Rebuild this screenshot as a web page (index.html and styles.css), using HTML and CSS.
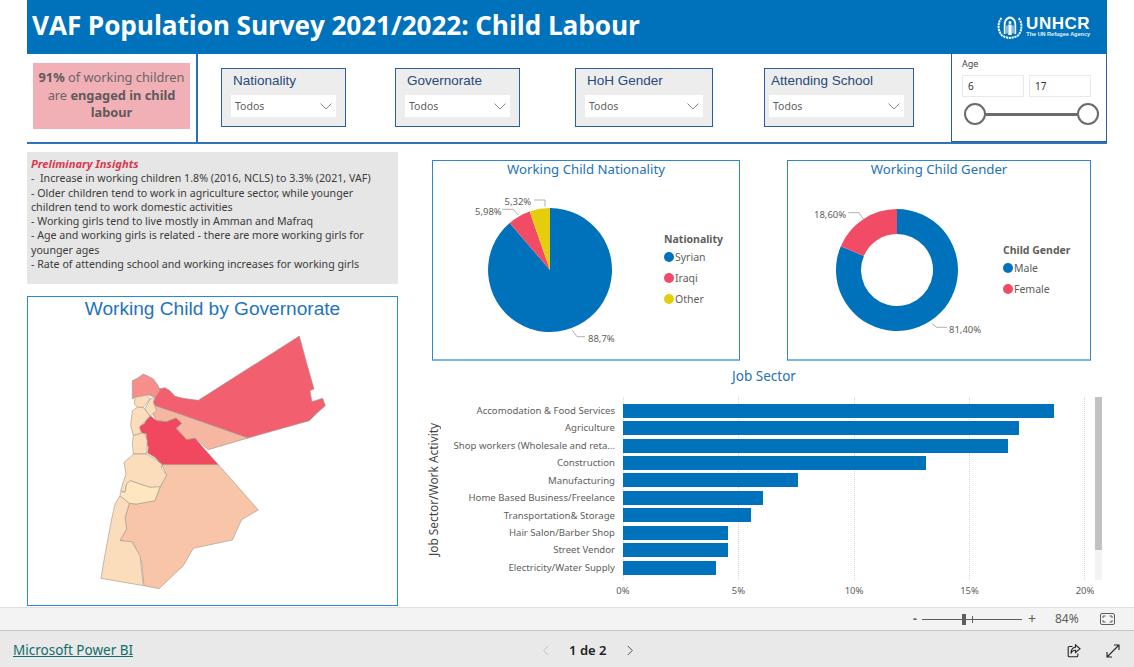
FILE: index.html
```html
<!DOCTYPE html>
<html lang="en">
<head>
<meta charset="utf-8">
<title>VAF Population Survey: Child Labour</title>
<link rel="stylesheet" href="styles.css">
</head>
<body>
<main class="report">
  <header class="banner">
    <h1 class="banner-title">VAF Population Survey 2021/2022: Child Labour</h1>
    <div class="logo">
      <svg class="logo-mark" viewBox="0 0 26 24" aria-hidden="true">
        <path d="M4.500 3C.5 7.500.5 15.500 5 20.500c2.500 1.800 5.500 2 8 2.500 2.500-.5 5.500-.7 8-2.500 4.500-5 4.500-13 .5-17.500" fill="none" stroke="#fff" stroke-width="2" stroke-dasharray="2.200 .7"/>
        <path d="M13 1.500C8.500 2 6.800 6 6.800 9.500V19h1.700V9.500C8.500 6.500 10.500 4 13 3.500 15.500 4 17.500 6.500 17.500 9.500V19h1.700V9.500C19.200 6 17.500 2 13 1.500Z" fill="#fff"/>
        <circle cx="13" cy="7.500" r="1.500" fill="#fff"/>
        <path d="M11.300 9.500h3.400V20h-3.400zM9.500 10.500h1v8h-1zM15.500 10.500h1v8h-1z" fill="#fff"/>
      </svg>
      <div class="logo-text">
        <span class="logo-name">UNHCR</span>
        <span class="logo-tag">The UN Refugee Agency</span>
      </div>
    </div>
  </header>

  <section class="filters">
    <div class="kpi-cell">
      <p class="kpi"><b>91%</b> of working children are <b>engaged in child labour</b></p>
    </div>
    <div class="slicer slicer-nat">
      <div class="slicer-title">Nationality</div>
      <div class="dropdown"><span>Todos</span><svg class="chev" viewBox="0 0 12 7"><path d="M.5.5 6 6l5.500-5.500"/></svg></div>
    </div>
    <div class="slicer slicer-gov">
      <div class="slicer-title">Governorate</div>
      <div class="dropdown"><span>Todos</span><svg class="chev" viewBox="0 0 12 7"><path d="M.5.5 6 6l5.500-5.500"/></svg></div>
    </div>
    <div class="slicer slicer-hoh">
      <div class="slicer-title">HoH Gender</div>
      <div class="dropdown"><span>Todos</span><svg class="chev" viewBox="0 0 12 7"><path d="M.5.5 6 6l5.500-5.500"/></svg></div>
    </div>
    <div class="slicer slicer-att">
      <div class="slicer-title">Attending School</div>
      <div class="dropdown"><span>Todos</span><svg class="chev" viewBox="0 0 12 7"><path d="M.5.5 6 6l5.500-5.500"/></svg></div>
    </div>
    <div class="age">
      <div class="age-label">Age</div>
      <div class="age-inputs">
        <div class="age-input">6</div>
        <div class="age-input">17</div>
      </div>
      <div class="range">
        <span class="range-handle"></span>
        <span class="range-track"></span>
        <span class="range-handle"></span>
      </div>
    </div>
  </section>

  <section class="content">
    <div class="col-left">
      <div class="insights">
        <p class="insights-head">Preliminary Insights</p>
        <p>-&nbsp; Increase in working children 1.8% (2016, NCLS) to 3.3% (2021, VAF)</p>
        <p>- Older children tend to work in agriculture sector, while younger children tend to work domestic activities</p>
        <p>- Working girls tend to live mostly in Amman and Mafraq</p>
        <p>- Age and working girls is related - there are more working girls for younger ages</p>
        <p>- Rate of attending school and working increases for working girls</p>
      </div>
      <div class="map-card">
        <h2 class="map-title">Working Child by Governorate</h2>
        <svg class="map" viewBox="24 102 1107 843" aria-hidden="true">
          <g stroke="#a3948a" stroke-width="1.800" stroke-linejoin="round">
            <path fill="#F26070" d="M838 141 858 215 882 300 870 305 876 338 908 328 916 350 888 375 868 395 684 447 470 372 440 362 405 350 398 340 408 322 415 300 435 296 450 305 465 322 490 328 535 334Z"/>
            <path fill="#F6B7A2" d="M390 362 405 350 440 362 470 372 684 447 565 482 525 448 500 452 468 418 485 403 468 387 440 398 410 395Z"/>
            <path fill="#F1485F" d="M358 410 372 405 388 378 410 395 440 398 468 387 485 403 468 418 500 452 525 448 595 527 425 527 405 505 383 492 385 475 378 460 380 435 360 430Z"/>
            <path fill="#F68F8C" d="M337 275 352 268 370 255 385 262 400 270 415 290 420 305 405 325 385 318 345 325 337 330Z"/>
            <path fill="#FCDDBB" d="M345 325 362 322 380 318 390 330 370 355 352 355 343 345Z"/>
            <path fill="#FCDDBB" d="M390 330 405 325 400 340 410 365 390 382 375 360Z"/>
            <path fill="#FCDDBB" d="M337 365 352 355 370 355 390 382 358 415 365 432 340 440 332 410Z"/>
            <path fill="#FCDDBB" d="M340 440 365 432 375 435 382 455 380 495 340 495 337 465Z"/>
            <path fill="#F9C5A9" d="M425 527 595 527 715 663 665 692 637 753 520 778 490 830 417 899 372 890 365 820 340 760 300 755 320 720 315 690 328 643 350 645 405 635 420 595 440 558Z"/>
            <path fill="#FCDDBB" d="M300 620 328 643 315 685 320 720 300 755 335 758 360 800 370 890 243 868 250 825 258 780 275 690 285 645Z"/>
            <path fill="#FCDDBB" d="M312 520 330 505 340 495 380 495 405 510 425 525 425 540 440 558 420 595 390 595 330 575 320 585 315 610 302 605 310 578 318 555Z"/>
            <path fill="#FEE6BE" d="M330 575 390 595 420 593 405 635 350 645 328 643 300 620 302 608 315 610 320 585Z"/>
          </g>
        </svg>
      </div>
    </div>

    <div class="col-right">
      <div class="pie-row">
        <article class="card card-nat">
          <h2 class="card-title">Working Child Nationality</h2>
          <div class="card-body">
            <svg class="pie pie-nat" viewBox="433 180 228 180" role="img" aria-label="Nationality pie chart">
              <g transform="translate(550 270)">
                <path fill="#0072BC" d="M0 0V-62A62 62 0 1 1-40.400-47Z"/>
                <path fill="#F24B65" d="M0 0-40.400-47A62 62 0 0 1-20.300-58.600Z"/>
                <path fill="#E3CD0C" d="M0 0-20.300-58.600A62 62 0 0 1 0-62Z"/>
              </g>
              <path class="leader" d="M572 330l5 6.700h8M502 209.300h11.300l5 5.700M534 200h11v6.700"/>
              <text class="data-label" x="588" y="341.500">88,7%</text>
              <text class="data-label" x="475" y="214.500">5,98%</text>
              <text class="data-label" x="504.500" y="205">5,32%</text>
            </svg>
            <div class="legend">
              <div class="legend-title">Nationality</div>
              <div class="legend-item"><i class="dot dot-blue"></i>Syrian</div>
              <div class="legend-item"><i class="dot dot-red"></i>Iraqi</div>
              <div class="legend-item"><i class="dot dot-yellow"></i>Other</div>
            </div>
          </div>
        </article>
        <article class="card card-gen">
          <h2 class="card-title">Working Child Gender</h2>
          <div class="card-body">
            <svg class="pie pie-gen" viewBox="788 180 212 180" role="img" aria-label="Gender donut chart">
              <g transform="translate(897 270)">
                <path fill="#0072BC" d="M0-61A61 61 0 1 1-56.200-23.800L-33.100-14.100A36 36 0 1 0 0-36Z"/>
                <path fill="#F24B65" d="M-56.200-23.800A61 61 0 0 1 0-61V-36A36 36 0 0 0-33.100-14.100Z"/>
              </g>
              <path class="leader" d="M848.300 212.700H859l4.300 6.300M931.700 323.300l5 4H947"/>
              <text class="data-label" x="814" y="217.500">18,60%</text>
              <text class="data-label" x="949" y="332.500">81,40%</text>
            </svg>
            <div class="legend legend-gen">
              <div class="legend-title">Child Gender</div>
              <div class="legend-item"><i class="dot dot-blue"></i>Male</div>
              <div class="legend-item"><i class="dot dot-red"></i>Female</div>
            </div>
          </div>
        </article>
      </div>

      <section class="job">
        <h2 class="job-title">Job Sector</h2>
        <div class="job-chart">
          <div class="y-title">Job Sector/Work Activity</div>
          <div class="job-main">
            <div class="plot-wrap">
              <div class="gridlines"><i></i><i></i><i></i><i></i><i></i></div>
              <div class="bar-row"><span class="bar-label">Accomodation &amp; Food Services</span><div class="bar-track"><div class="bar" style="width:93.3%"></div></div></div>
              <div class="bar-row"><span class="bar-label">Agriculture</span><div class="bar-track"><div class="bar" style="width:85.7%"></div></div></div>
              <div class="bar-row"><span class="bar-label">Shop workers (Wholesale and reta...</span><div class="bar-track"><div class="bar" style="width:83.3%"></div></div></div>
              <div class="bar-row"><span class="bar-label">Construction</span><div class="bar-track"><div class="bar" style="width:65.6%"></div></div></div>
              <div class="bar-row"><span class="bar-label">Manufacturing</span><div class="bar-track"><div class="bar" style="width:37.9%"></div></div></div>
              <div class="bar-row"><span class="bar-label">Home Based Business/Freelance</span><div class="bar-track"><div class="bar" style="width:30.3%"></div></div></div>
              <div class="bar-row"><span class="bar-label">Transportation&amp; Storage</span><div class="bar-track"><div class="bar" style="width:27.7%"></div></div></div>
              <div class="bar-row"><span class="bar-label">Hair Salon/Barber Shop</span><div class="bar-track"><div class="bar" style="width:22.7%"></div></div></div>
              <div class="bar-row"><span class="bar-label">Street Vendor</span><div class="bar-track"><div class="bar" style="width:22.7%"></div></div></div>
              <div class="bar-row"><span class="bar-label">Electricity/Water Supply</span><div class="bar-track"><div class="bar" style="width:20.1%"></div></div></div>
            </div>
            <div class="x-axis"><span>0%</span><span>5%</span><span>10%</span><span>15%</span><span>20%</span></div>
          </div>
          <div class="scrollbar"><div class="scroll-thumb"></div></div>
        </div>
      </section>
    </div>
  </section>
</main>

<div class="zoom-bar">
  <span class="zoom-minus">-</span>
  <div class="zoom-slider"><span class="zoom-mark"></span><span class="zoom-thumb"></span></div>
  <span class="zoom-plus">+</span>
  <span class="zoom-pct">84%</span>
  <svg class="fit-icon" viewBox="0 0 15 12" aria-hidden="true">
    <rect x=".5" y=".5" width="14" height="11" rx="1.500"/>
    <path d="M3 5V3h2.500M12 5V3H9.500M3 7v2h2.500M12 7v2H9.500"/>
  </svg>
</div>

<footer class="footer">
  <a class="pbi-link" href="#">Microsoft Power BI</a>
  <nav class="pager">
    <svg class="pager-chev pager-off" viewBox="0 0 7 12"><path d="M6 1 1 6l5 5"/></svg>
    <span class="pager-text">1 de 2</span>
    <svg class="pager-chev" viewBox="0 0 7 12"><path d="m1 1 5 5-5 5"/></svg>
  </nav>
  <div class="foot-actions">
    <svg class="foot-icon" viewBox="0 0 14 14" aria-hidden="true">
      <path d="M5.500 2.500H2.200a1 1 0 0 0-1 1v8.300a1 1 0 0 0 1 1h7.600a1 1 0 0 0 1-1V9.500"/>
      <path d="M8.500.8 13 4.800 8.500 8.500V6.300C6 6.300 4.700 7.500 4 9.500 4 6 5.500 3.500 8.500 3.200Z"/>
    </svg>
    <svg class="foot-icon" viewBox="0 0 14 14" aria-hidden="true">
      <path d="M1 13 13 1M8 1h5v5M1 8v5h5"/>
    </svg>
  </div>
</footer>
</body>
</html>
```
FILE: styles.css
```css
* { box-sizing: border-box; }
html, body { margin: 0; padding: 0; }
body {
  width: 1134px;
  height: 667px;
  overflow: hidden;
  background: #fff;
  font-family: "Noto Sans", "Open Sans", sans-serif;
  color: #605e5c;
}
h1, h2, p { margin: 0; font-weight: normal; }

.report { width: 1080px; height: 607px; margin-left: 27px; overflow: hidden; }

/* banner */
.banner {
  height: 54px;
  background: #0072BC;
  display: flex;
  align-items: center;
  justify-content: space-between;
  padding: 0 17px 0 5px;
  color: #fff;
}
.banner-title { font: 700 26.200px/1 "Open Sans", sans-serif; letter-spacing: -.1px; color: #fff; padding-bottom: 4px; }
.logo { display: flex; align-items: center; gap: 3px; }
.logo-mark { width: 26px; height: 24px; }
.logo-text { display: flex; flex-direction: column; align-items: flex-end; }
.logo-name { font: 700 17px/14px "Liberation Sans", sans-serif; letter-spacing: .5px; color: #fff; }
.logo-tag { font: 700 5.500px/7px "Liberation Sans", sans-serif; color: #e6f1f8; }

/* filter strip */
.filters {
  height: 90px;
  display: flex;
  align-items: flex-start;
  border-bottom: 2px solid #2f74b8;
}
.kpi-cell {
  width: 171px;
  height: 88px;
  padding: 9px 0 0 6px;
  border-right: 2px solid #2a70b8;
  flex: none;
}
.kpi {
  width: 157px;
  height: 66px;
  background: #f0b0b5;
  color: #6b6566;
  font: 12.800px/17.500px "Noto Sans", sans-serif;
  text-align: center;
  padding: 6px 3px 0;
}
.kpi b { font-weight: 700; color: #5f5a5b; }

.slicer {
  flex: none;
  height: 59px;
  margin-top: 14px;
  background: #ededed;
  border: 1.500px solid #2a5f9e;
  padding: 3px 9px 0;
}
.slicer-nat { width: 125px; margin-left: 23px; }
.slicer-gov { width: 125px; margin-left: 49px; }
.slicer-hoh { width: 138px; margin-left: 55px; }
.slicer-att { width: 150px; margin-left: 51px; padding-left: 4px; }
.slicer-title { font: 13.500px/17px "Liberation Sans", sans-serif; color: #274a78; padding: 0 2px; }
.dropdown {
  margin: 6px 0 0;
  height: 22px;
  background: #fff;
  display: flex;
  align-items: center;
  justify-content: space-between;
  padding: 0 4px 0 4px;
  font: 10.500px/1 "Noto Sans", sans-serif;
  color: #605e5c;
}
.chev { width: 12px; height: 7px; fill: none; stroke: #8a8a8a; stroke-width: 1; }

.age {
  flex: none;
  width: 156px;
  height: 88px;
  margin-left: 37px;
  border: 1.500px solid #2a5f9e;
  border-top: 0;
  padding: 4px 10px 0;
}
.age-label { font: 9px/12px "Noto Sans", sans-serif; color: #444; }
.age-inputs { display: flex; gap: 5px; margin-top: 5px; }
.age-input {
  width: 62px;
  height: 22px;
  border: 1px solid #e9e9e9;
  font: 10px/20px "Noto Sans", sans-serif;
  color: #333;
  padding-left: 5px;
}
.range { display: flex; align-items: center; margin-top: 6px; width: 135px; margin-left: 1.500px; }
.range-handle {
  flex: none;
  width: 22px;
  height: 22px;
  border: 2.500px solid #6b6b6b;
  border-radius: 50%;
  background: #fff;
}
.range-track { flex: 1; height: 3px; background: #6b6b6b; }

/* main */
.content {
  display: grid;
  grid-template-columns: 371px 675px;
  column-gap: 34px;
  padding-top: 8px;
}
.insights {
  height: 132px;
  background: #e6e6e6;
  padding: 5px 10px 0 4px;
  font: 10.650px/14.300px "Noto Sans", sans-serif;
  color: #3d3b3a;
}
.insights-head { font-weight: 700; font-style: italic; font-size: 11.200px; color: #d9394e; }
.map-card {
  margin-top: 12px;
  height: 310px;
  border: 1px solid #2b88d8;
}
.map-title {
  height: 26px;
  font: 19.100px/24px "Liberation Sans", sans-serif;
  color: #1f74bd;
  text-align: center;
}
.map { display: block; width: 369px; height: 281px; }

.col-right { padding-top: 8px; }
.pie-row { display: flex; gap: 47px; }
.card {
  height: 201px;
  border: 1px solid #2f86cc;
  border-bottom-width: 2px;
  border-bottom-color: #7db7e3;
}
.card-nat { width: 308px; }
.card-gen { width: 304px; }
.card-title {
  height: 19px;
  font: 13.200px/16px "Noto Sans", sans-serif;
  color: #2472b8;
  text-align: center;
}
.card-body { display: flex; align-items: center; height: 180px; }
.pie { flex: none; display: block; height: 180px; }
.pie-nat { width: 228px; }
.pie-gen { width: 212px; }
.leader { fill: none; stroke: #b3b0ad; stroke-width: 1; }
.data-label { font: 9.500px "Noto Sans", sans-serif; fill: #605e5c; }
.legend { margin-left: 3px; padding-top: 1px; }
.legend-gen { padding-top: 2px; }
.legend-title { font: 700 10.500px/15px "Noto Sans", sans-serif; color: #605e5c; }
.legend-item {
  display: flex;
  align-items: center;
  gap: 1px;
  height: 21px;
  font: 10.500px/1 "Noto Sans", sans-serif;
  color: #605e5c;
}
.dot { width: 10px; height: 10px; border-radius: 50%; flex: none; }
.dot-blue { background: #0072BC; }
.dot-red { background: #F24B65; }
.dot-yellow { background: #E3CD0C; }

.job { width: 675px; margin-top: 6px; }
.job-title {
  width: 664px;
  height: 18px;
  font: 13.500px/18px "Noto Sans", sans-serif;
  color: #2472b8;
  text-align: center;
}
.job-chart { display: flex; align-items: flex-start; margin-top: 12px; margin-left: -5px; }
.y-title {
  flex: none;
  width: 14px;
  height: 185px;
  writing-mode: vertical-rl;
  transform: rotate(180deg);
  text-align: center;
  white-space: nowrap;
  font: 11.900px/14px "Noto Sans", sans-serif;
  color: #444;
  margin-left: -1px;
  margin-right: 1px;
}
.plot-wrap { position: relative; padding-top: 5px; height: 183px; }
.bar-row { display: grid; grid-template-columns: 174px 462px; column-gap: 8px; height: 17.450px; align-items: center; position: relative; }
.bar-label { font: 9.600px/1 "Noto Sans", sans-serif; color: #605e5c; text-align: right; white-space: nowrap; }
.bar-track { height: 14px; }
.bar { height: 14px; background: #0072BC; }
.gridlines {
  position: absolute;
  left: 182px;
  top: 0;
  bottom: 0;
  width: 462px;
  display: flex;
  justify-content: space-between;
}
.gridlines i { width: 0; border-left: 1px dotted #d5d5d5; }
.x-axis {
  margin-left: 182px;
  width: 462px;
  display: flex;
  justify-content: space-between;
  margin-top: 4px;
}
.x-axis span {
  width: 0;
  display: flex;
  justify-content: center;
  font: 9.500px/14px "Noto Sans", sans-serif;
  color: #605e5c;
  white-space: nowrap;
}
.scrollbar { flex: none; width: 7px; height: 183px; margin-left: 10px; background: #f3f3f3; }
.scroll-thumb { height: 153px; background: #c2c2c2; }

/* zoom bar */
.zoom-bar {
  height: 23px;
  background: #f3f3f3;
  border-top: 1px solid #e0e0e0;
  display: flex;
  align-items: center;
  padding-left: 913px;
  font: 12px/1 "Noto Sans", sans-serif;
  color: #605e5c;
}
.zoom-minus { width: 9px; font-weight: 700; }
.zoom-slider { position: relative; width: 100px; height: 1px; background: #605e5c; }
.zoom-mark { position: absolute; left: 50px; top: -3px; width: 1px; height: 7px; background: #605e5c; }
.zoom-thumb { position: absolute; left: 40px; top: -5px; width: 4px; height: 11px; background: #605e5c; }
.zoom-plus { margin-left: 6px; width: 12px; font-size: 14px; }
.zoom-pct { margin-left: 15px; width: 24px; }
.fit-icon { margin-left: 21px; width: 15px; height: 12px; fill: none; stroke: #605e5c; stroke-width: 1; }

/* footer */
.footer {
  height: 37px;
  background: #e9e9e9;
  border-top: 1px solid #c8c8c8;
  display: flex;
  align-items: center;
  padding: 3px 13px 0;
}
.pbi-link { font: 13.500px/1 "Noto Sans", sans-serif; color: #136c6c; padding-top: 1px; }
.pager { display: flex; align-items: center; margin-left: 409px; }
.pager-chev { width: 8px; height: 11px; fill: none; stroke: #444; stroke-width: 1; }
.pager-off { stroke: #bdbdbd; }
.pager-text { margin: 0 20px 0 19px; font: 600 13px/1 "Noto Sans", sans-serif; color: #222; }
.foot-actions { margin-left: auto; display: flex; gap: 25px; padding-right: 1px; }
.foot-icon { width: 14px; height: 14px; fill: none; stroke: #252423; stroke-width: 1.100; }
```
